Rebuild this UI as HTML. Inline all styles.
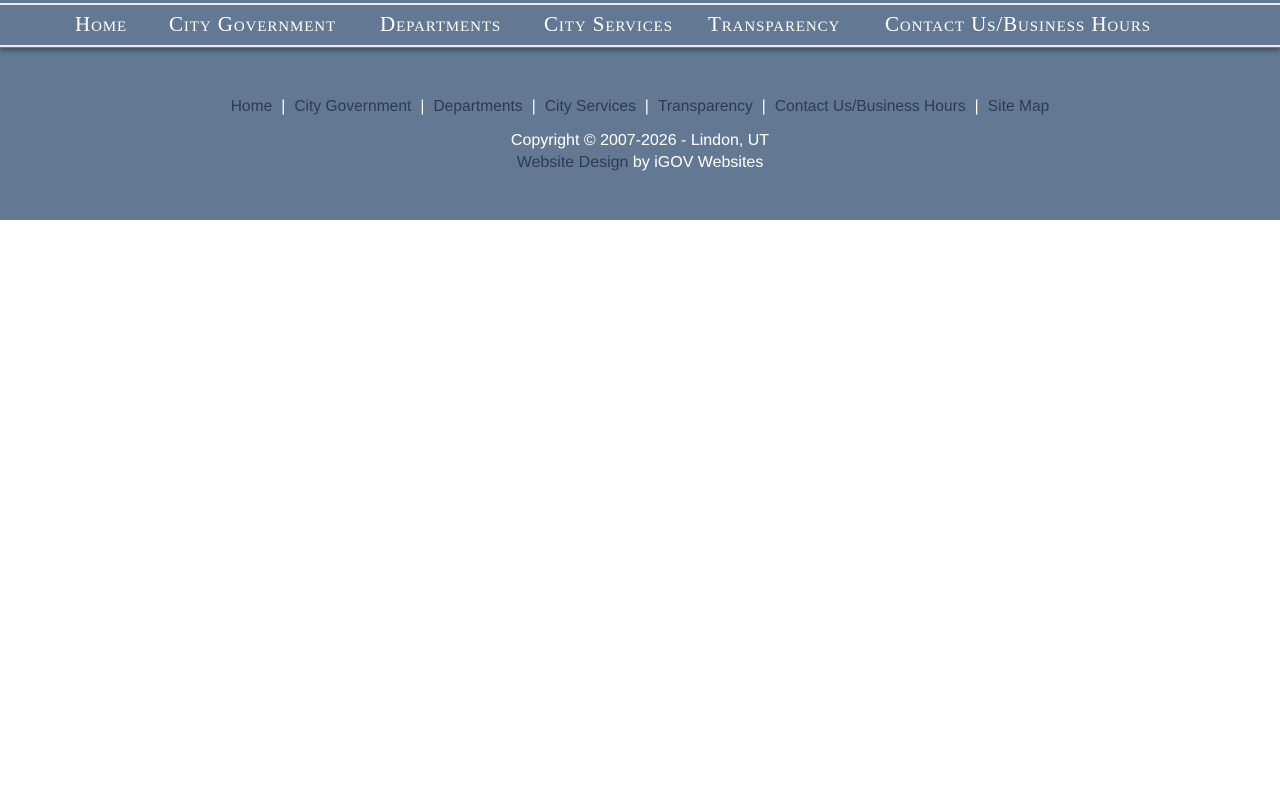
<!DOCTYPE html>
<html><head><style>
body{margin:0;background:#fff;font-family:"Liberation Sans",sans-serif}
.wrap{background:#627893;height:220px;position:relative}
.nav{position:absolute;top:0;left:0;right:0;height:48px;box-shadow:0 3px 4px rgba(0,0,0,.3);background:#627893}
.l1{position:absolute;top:3px;left:0;right:0;height:2px;background:#e8ecf2}
.l2{position:absolute;top:45px;left:0;right:0;height:2px;background:#e8ecf2}
.nav span{position:absolute;top:12px;font-family:"Liberation Serif",serif;font-variant:small-caps;color:#fff;font-size:21px;white-space:nowrap;letter-spacing:0.9px}
.links{position:absolute;top:98px;left:0;right:0;text-align:center;font-size:15.5px;color:#2c3b52;letter-spacing:0.05px}
.links b{font-weight:normal;color:#fff;margin:0 9px}
.c{position:absolute;top:130px;left:0;right:0;text-align:center;color:#fff;font-size:16px;line-height:22px}
.c a{color:#2c3b52;text-decoration:none}
</style></head><body>
<div class="wrap">
<div class="nav"><div class="l1"></div><div class="l2"></div>
<span style="left:75px">Home</span>
<span style="left:169px">City Government</span>
<span style="left:380px">Departments</span>
<span style="left:544px">City Services</span>
<span style="left:708px">Transparency</span>
<span style="left:885px">Contact Us/Business Hours</span>
</div>
<div class="links">Home<b>|</b>City Government<b>|</b>Departments<b>|</b>City Services<b>|</b>Transparency<b>|</b>Contact Us/Business Hours<b>|</b>Site Map</div>
<div class="c">Copyright © 2007-2026 - Lindon, UT<br><a>Website Design</a> by iGOV Websites</div>
</div>
</body></html>
